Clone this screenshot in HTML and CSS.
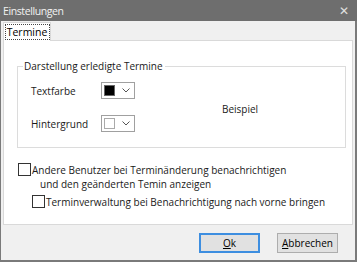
FILE: index.html
```html
<!DOCTYPE html>
<html lang="de">
<head>
    <meta charset="UTF-8">
    <title>Einstellungen</title>
    <link rel="stylesheet" href="styles.css">
</head>
<body>
    <div class="window">
        <div class="titlebar">
            <span class="title">Einstellungen</span>
            <span class="close">✕</span>
        </div>

        <div class="client">
            <div class="tabs">
                <div class="tab"><span class="focus">Termine</span></div>
            </div>

            <div class="panel">
                <div class="group">
                    <span class="legend">Darstellung erledigte Termine</span>
                    <div class="group-body">
                        <div class="fields">
                            <div class="row">
                                <span class="label">Textfarbe</span>
                                <div class="combo">
                                    <span class="swatch black"></span>
                                    <svg class="chevron" width="8" height="5" viewBox="0 0 8 5"><path d="M0.5 0.5 L4 4 L7.5 0.5" fill="none" stroke="#555" stroke-width="1"/></svg>
                                </div>
                            </div>
                            <div class="row">
                                <span class="label">Hintergrund</span>
                                <div class="combo">
                                    <span class="swatch white"></span>
                                    <svg class="chevron" width="8" height="5" viewBox="0 0 8 5"><path d="M0.5 0.5 L4 4 L7.5 0.5" fill="none" stroke="#555" stroke-width="1"/></svg>
                                </div>
                            </div>
                        </div>
                        <div class="preview">Beispiel</div>
                    </div>
                </div>

                <div class="check first">
                    <span class="box"></span>
                    <span class="check-text">Andere Benutzer bei Terminänderung benachrichtigen<br><span class="indent">und den geänderten Temin anzeigen</span></span>
                </div>
                <div class="check second">
                    <span class="box"></span>
                    <span class="check-text">Terminverwaltung bei Benachrichtigung nach vorne bringen</span>
                </div>
            </div>

            <div class="buttons">
                <button class="btn default"><u>O</u>k</button>
                <button class="btn"><u>A</u>bbrechen</button>
            </div>
        </div>
    </div>
</body>
</html>
```

FILE: styles.css
```css
body {
    margin: 0;
    padding: 0;
    background: #fff;
    font-family: "Open Sans", "Noto Sans", sans-serif;
    font-size: 10px;
    color: #1a1a1a;
}

.window {
    width: 357px;
    height: 262px;
    box-sizing: border-box;
    border: 1px solid #7a7a7a;
    border-top: none;
    border-right-width: 2px;
    border-bottom-width: 2px;
    background: #f0f0f0;
    display: flex;
    flex-direction: column;
}

.titlebar {
    height: 21px;
    background: #6e6e6e;
    color: #f2f2f2;
    display: flex;
    align-items: center;
    justify-content: space-between;
    padding: 0 8px 0 3px;
    margin: 0 -2px 0 -1px;
    font-size: 10.5px;
    letter-spacing: -0.4px;
}

.close {
    font-size: 12px;
    color: #e0e0e0;
}

.client {
    flex: 1;
    display: flex;
    flex-direction: column;
    padding: 0 2px 0 2px;
}

/* Reiter */
.tabs {
    height: 19px;
    display: flex;
    align-items: flex-end;
}

.tab {
    width: 48px;
    height: 19px;
    box-sizing: border-box;
    background: #fff;
    border: 1px solid #d9d9d9;
    border-bottom: none;
    display: flex;
    align-items: center;
    justify-content: center;
    margin-bottom: -1px;
    position: relative;
    z-index: 1;
}

.tab .focus {
    width: 45px;
    height: 16px;
    box-sizing: border-box;
    border: 1px dotted #444;
    display: flex;
    align-items: center;
    justify-content: center;
    font-size: 10.5px;
    color: #000;
}

.panel {
    height: 185px;
    box-sizing: border-box;
    background: #fff;
    border: 1px solid #d9d9d9;
    padding: 25px 6px 0 13px;
}

/* Gruppe */
.group {
    height: 82px;
    box-sizing: border-box;
    border: 1px solid #dcdcdc;
    display: flex;
    flex-direction: column;
}

.legend {
    align-self: flex-start;
    margin: -8px 0 0 5px;
    padding: 0 2px 0 1px;
    background: #fff;
    line-height: 15px;
}

.group-body {
    flex: 1;
    display: flex;
}

.fields {
    padding: 8px 0 0 13px;
    display: flex;
    flex-direction: column;
    gap: 16px;
}

.row {
    display: flex;
    align-items: center;
}

.label {
    width: 70px;
}

.combo {
    width: 34px;
    height: 17px;
    box-sizing: border-box;
    border: 1px solid #a0a0a0;
    display: flex;
    align-items: center;
    padding-left: 2px;
}

.swatch {
    width: 11px;
    height: 11px;
    box-sizing: border-box;
    border: 1px solid #666;
}

.swatch.black {
    background: #000;
}

.swatch.white {
    background: #fff;
    border-color: #aaa;
}

.chevron {
    margin-left: 7px;
}

.preview {
    flex: 1;
    display: flex;
    align-items: center;
    justify-content: center;
    padding-bottom: 4px;
}

/* Checkboxen */
.check {
    display: flex;
    align-items: flex-start;
    white-space: nowrap;
}

.check.first {
    margin-top: 15px;
    margin-left: 1px;
}

.check.second {
    margin-top: 4px;
    margin-left: 15px;
}

.box {
    width: 13px;
    height: 13px;
    box-sizing: border-box;
    border: 1px solid #333;
    background: #fff;
    margin-right: 1px;
}

.check-text {
    line-height: 14px;
}

.indent {
    padding-left: 8px;
}

/* Knöpfe */
.buttons {
    flex: 1;
    display: flex;
    justify-content: flex-end;
    align-items: center;
    gap: 17px;
    padding-right: 15px;
}

.btn {
    width: 61px;
    height: 20px;
    box-sizing: border-box;
    border: 1px solid #adadad;
    background: #e1e1e1;
    font-family: inherit;
    font-size: 10px;
    color: #000;
    padding: 0;
}

.btn.default {
    border: 1px solid #3d8ee0;
    box-shadow: inset 0 0 0 1px #3d8ee0;
}
```
